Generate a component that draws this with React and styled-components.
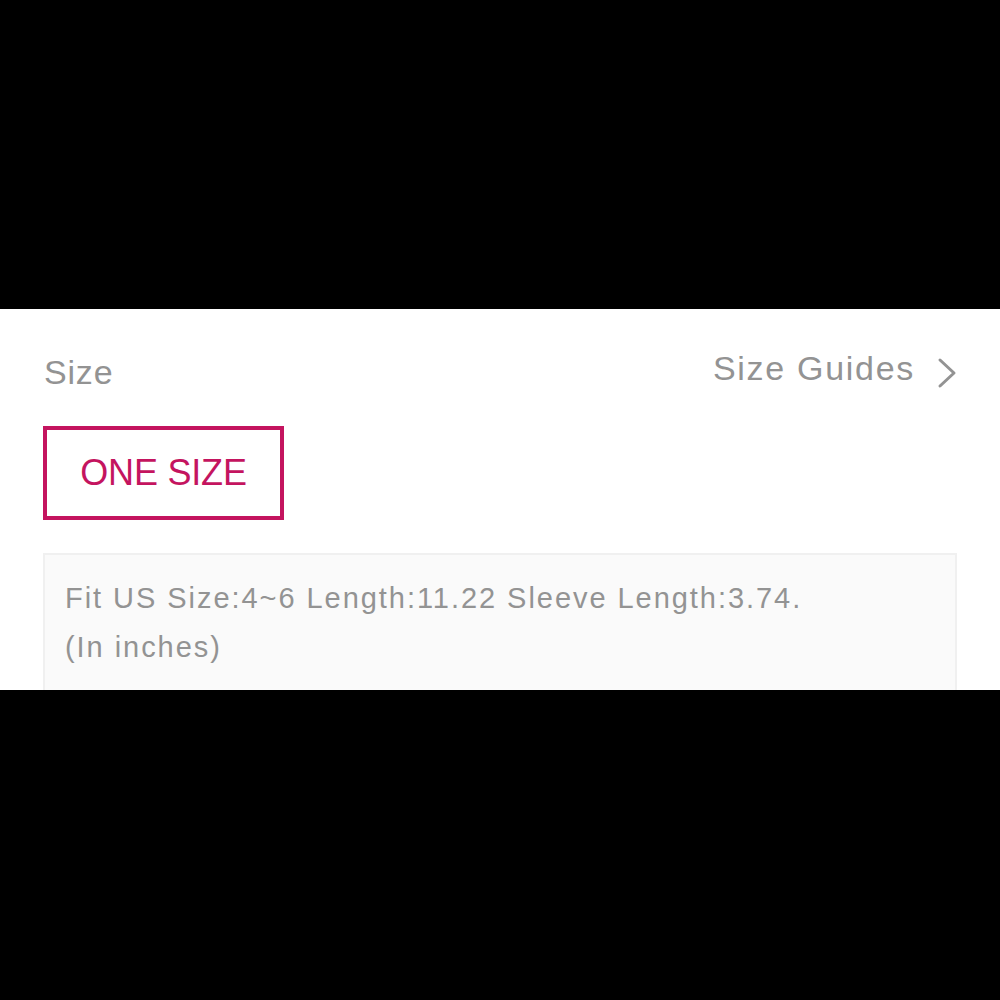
import React from 'react';
import styled, { createGlobalStyle } from 'styled-components';

const Global = createGlobalStyle`
    html, body {
        margin: 0;
        padding: 0;
        background: #000;
    }
    body {
        font-family: "Liberation Sans", Arial, sans-serif;
        -webkit-font-smoothing: antialiased;
    }
`

const Page = styled.div`
    width: 1000px;
    height: 1000px;
    padding-top: 309px;
    box-sizing: border-box;
    background: #000;
`

const Panel = styled.section`
    height: 381px;
    overflow: hidden;
    background: #fff;
    padding: 38px 43px 0 43px;
    box-sizing: border-box;
`

const Header = styled.div`
    display: flex;
    justify-content: space-between;
    align-items: flex-start;
`

const Title = styled.div`
    margin-top: 5px;
    margin-left: 1px;
    font-size: 34px;
    line-height: 40px;
    letter-spacing: 0.8px;
    color: #939393;
`

const GuideLink = styled.a`
    display: flex;
    align-items: center;
    gap: 22px;
    font-size: 34px;
    line-height: 40px;
    letter-spacing: 1.7px;
    color: #939393;
    text-decoration: none;
    cursor: pointer;
`

const Chevron = styled.svg`
    width: 20px;
    height: 32px;
    margin-top: 10px;
`

const SizeOption = styled.button`
    margin-top: 34px;
    width: 241px;
    height: 94px;
    display: flex;
    align-items: center;
    justify-content: center;
    background: #fff;
    border: 4px solid ${p => (p.active ? '#c4145f' : '#ddd')};
    color: ${p => (p.active ? '#c4145f' : '#666')};
    font-family: "Liberation Sans", Arial, sans-serif;
    font-size: 36px;
    letter-spacing: -0.2px;
    padding: 0;
    box-sizing: border-box;
`

const Note = styled.div`
    margin-top: 33px;
    background: #fafafa;
    border: 2px solid #f0f0f0;
    padding: 19px 20px 30px 20px;
    font-size: 29px;
    line-height: 49px;
    letter-spacing: 1.95px;
    color: #939393;
`

export default function App() {
    return (
        <Page>
            <Global />
            <Panel>
                <Header>
                    <Title>Size</Title>
                    <GuideLink>
                        Size Guides
                        <Chevron viewBox="0 0 20 32">
                            <polyline points="3,3 17,16 3,29" fill="none" stroke="#939393" strokeWidth="3" strokeLinecap="round" strokeLinejoin="round" />
                        </Chevron>
                    </GuideLink>
                </Header>
                <SizeOption active>ONE SIZE</SizeOption>
                <Note>
                    Fit US Size:4~6 Length:11.22 Sleeve Length:3.74.
                    <br />
                    (In inches)
                </Note>
            </Panel>
        </Page>
    );
}
